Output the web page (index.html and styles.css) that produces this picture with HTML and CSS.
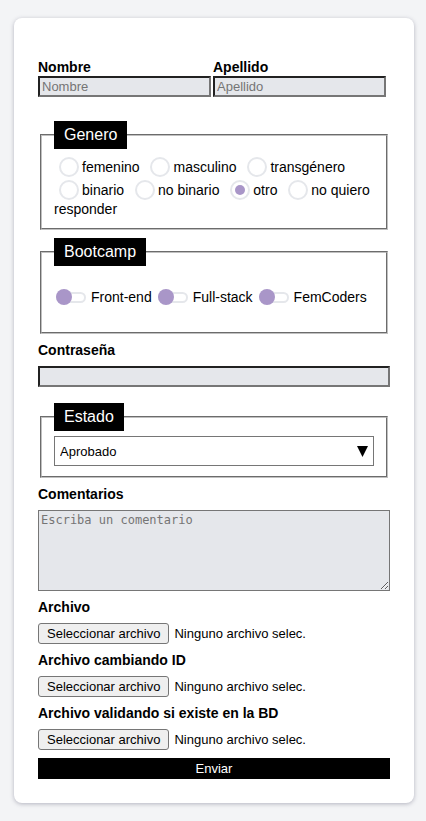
FILE: index.html
```html
<!DOCTYPE html>
<html lang="es">
<head>
<meta charset="utf-8">
<meta name="viewport" content="width=device-width, initial-scale=1">
<title>Formulario</title>
<link rel="stylesheet" href="styles.css">
</head>
<body>
<form class="card">
  <div class="names">
    <div class="name-field">
      <label class="label" for="nombre">Nombre</label>
      <input class="text-input" id="nombre" type="text" placeholder="Nombre">
    </div>
    <div class="name-field">
      <label class="label" for="apellido">Apellido</label>
      <input class="text-input" id="apellido" type="text" placeholder="Apellido">
    </div>
  </div>

  <fieldset class="group">
    <legend class="legend">Genero</legend>
    <span class="option"><input class="radio" type="radio" name="genero" id="femenino"><label for="femenino">femenino</label></span>
    <span class="option"><input class="radio" type="radio" name="genero" id="masculino"><label for="masculino">masculino</label></span>
    <span class="option"><input class="radio" type="radio" name="genero" id="transgenero"><label for="transgenero">transgénero</label></span>
    <span class="option"><input class="radio" type="radio" name="genero" id="binario"><label for="binario">binario</label></span>
    <span class="option"><input class="radio" type="radio" name="genero" id="no-binario"><label for="no-binario">no binario</label></span>
    <span class="option"><input class="radio" type="radio" name="genero" id="otro" checked><label for="otro">otro</label></span>
    <span class="option"><input class="radio" type="radio" name="genero" id="no-responder"><label class="wrapping" for="no-responder">no quiero responder</label></span>
  </fieldset>

  <fieldset class="group">
    <legend class="legend">Bootcamp</legend>
    <div class="switches">
      <label class="switch-label"><input class="switch" type="checkbox">Front-end</label>
      <label class="switch-label"><input class="switch" type="checkbox">Full-stack</label>
      <label class="switch-label"><input class="switch" type="checkbox">FemCoders</label>
    </div>
  </fieldset>

  <label class="label" for="contrasena">Contraseña</label>
  <input class="text-input" id="contrasena" type="password">

  <fieldset class="group group-spaced">
    <legend class="legend">Estado</legend>
    <div class="select-box">
      <select class="select" aria-label="Estado">
        <option>Aprobado</option>
      </select>
    </div>
  </fieldset>

  <label class="label" for="comentarios">Comentarios</label>
  <textarea class="comment" id="comentarios" placeholder="Escriba un comentario"></textarea>

  <label class="label" for="archivo">Archivo</label>
  <label class="file"><input class="file-input" id="archivo" type="file"><span class="file-button">Seleccionar archivo</span><span>Ninguno archivo selec.</span></label>

  <label class="label" for="archivo-id">Archivo cambiando ID</label>
  <label class="file"><input class="file-input" id="archivo-id" type="file"><span class="file-button">Seleccionar archivo</span><span>Ninguno archivo selec.</span></label>

  <label class="label" for="archivo-bd">Archivo validando si existe en la BD</label>
  <label class="file"><input class="file-input" id="archivo-bd" type="file"><span class="file-button">Seleccionar archivo</span><span>Ninguno archivo selec.</span></label>

  <button class="submit" type="submit">Enviar</button>
</form>
</body>
</html>
```
FILE: styles.css
```css
* {
  box-sizing: border-box;
}

body {
  margin: 0;
  padding: 18px 12px 18px 14px;
  background: #f3f4f6;
  color: #000;
  font-family: "Liberation Sans", Arial, sans-serif;
  font-size: 14px;
}

.card {
  display: flex;
  flex-direction: column;
  gap: 8px;
  padding: 41px 24px 24px;
  border-radius: 8px;
  background: #fff;
  box-shadow: 0 1px 4px rgba(60, 60, 90, 0.35);
}

.names {
  display: flex;
  gap: 2px;
  padding-right: 4px;
  margin-bottom: 16px;
}

.name-field {
  display: flex;
  flex: 1;
  flex-direction: column;
  gap: 1px;
  min-width: 0;
}

.label {
  font-size: 14px;
  font-weight: 700;
  line-height: 16px;
}

.text-input {
  width: 100%;
  height: 21px;
  padding: 1px 2px;
  border: 2px inset #767676;
  border-radius: 0;
  background: #e5e7eb;
  font-family: inherit;
  font-size: 13px;
}

.text-input::placeholder,
.comment::placeholder {
  color: #757575;
}

.group {
  min-width: 0;
  margin: 0 2px;
  padding: 5px 12px 10px;
  border: 2px groove #c0c0c0;
  line-height: 18px;
}

.group-spaced {
  margin-top: 8px;
}

.legend {
  padding: 5px 10px;
  background: #000;
  color: #fff;
  font-size: 16px;
  line-height: 18px;
}

.option {
  margin-right: 2px;
  white-space: nowrap;
}

.wrapping {
  white-space: normal;
}

.radio {
  display: inline-block;
  appearance: none;
  width: 20px;
  height: 20px;
  margin: 3px 3px 0 5px;
  padding: 3px;
  border: 2px solid #e5e7eb;
  border-radius: 50%;
  vertical-align: -5px;
}

.radio:checked {
  background: #a996c8 content-box;
}

.switches {
  display: flex;
  flex-wrap: wrap;
  gap: 6px;
  padding: 17px 2px 16px;
}

.switch-label {
  display: flex;
  align-items: center;
  gap: 5px;
}

.switch {
  display: flex;
  align-items: center;
  appearance: none;
  width: 30px;
  height: 11px;
  margin: 0;
  border: 2px solid #e5e7eb;
  border-radius: 6px;
}

.switch::before {
  content: "";
  width: 16px;
  height: 16px;
  flex: none;
  margin-left: -2px;
  border-radius: 50%;
  background: #a996c8;
}

.switch:checked::before {
  margin-left: 12px;
}

.select-box {
  position: relative;
}

.select-box::after {
  content: "";
  position: absolute;
  top: 10px;
  right: 6px;
  width: 11px;
  height: 11px;
  background: #000;
  clip-path: polygon(0 0, 100% 0, 50% 100%);
  pointer-events: none;
}

.select {
  display: block;
  appearance: none;
  width: 100%;
  height: 30px;
  padding: 0 5px;
  border: 1px solid #767676;
  border-radius: 0;
  background: #fff;
  color: #000;
  font-family: inherit;
  font-size: 13px;
}

.comment {
  height: 81px;
  padding: 2px;
  border: 1px solid #767676;
  background: #e5e7eb;
  font-family: "DejaVu Sans Mono", monospace;
  font-size: 12px;
  resize: both;
}

.file {
  position: relative;
  display: flex;
  align-items: center;
  gap: 5px;
  height: 21px;
  font-size: 13px;
}

.file-input {
  position: absolute;
  width: 100%;
  height: 100%;
  opacity: 0;
}

.file-button {
  padding: 2px 8px;
  border: 1px solid #767676;
  border-radius: 3px;
  background: #efefef;
  line-height: 15px;
}

.submit {
  height: 21px;
  padding: 0;
  border: 0;
  background: #000;
  color: #fff;
  font-family: inherit;
  font-size: 13px;
}
```
